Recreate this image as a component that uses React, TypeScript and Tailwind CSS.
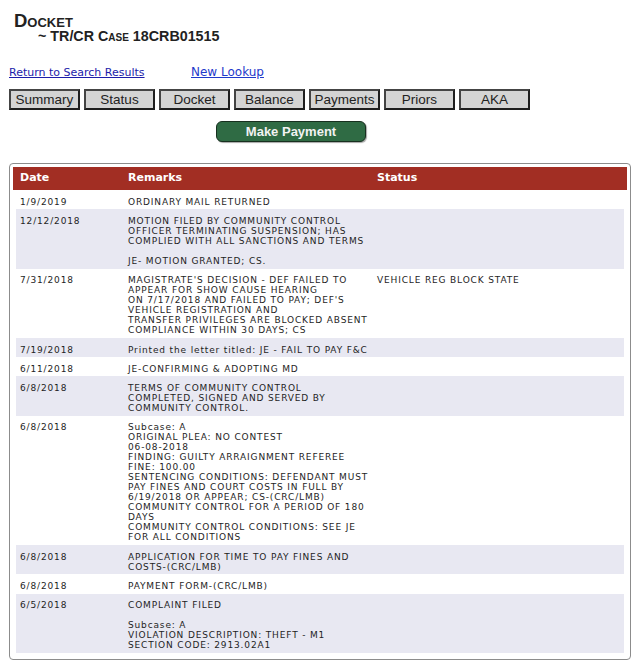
import { FC } from 'react';

interface DocketRow {
  date: string;
  remarks: string[];
  status?: string;
}

const tabs = ['Summary', 'Status', 'Docket', 'Balance', 'Payments', 'Priors', 'AKA'];

const rows: DocketRow[] = [
  { date: '1/9/2019', remarks: ['ORDINARY MAIL RETURNED'] },
  {
    date: '12/12/2018',
    remarks: [
      'MOTION FILED BY COMMUNITY CONTROL',
      'OFFICER TERMINATING SUSPENSION; HAS',
      'COMPLIED WITH ALL SANCTIONS AND TERMS',
      '',
      'JE- MOTION GRANTED; CS.',
    ],
  },
  {
    date: '7/31/2018',
    remarks: [
      "MAGISTRATE'S DECISION - DEF FAILED TO",
      'APPEAR FOR SHOW CAUSE HEARING',
      "ON 7/17/2018 AND FAILED TO PAY; DEF'S",
      'VEHICLE REGISTRATION AND',
      'TRANSFER PRIVILEGES ARE BLOCKED ABSENT',
      'COMPLIANCE WITHIN 30 DAYS; CS',
    ],
    status: 'VEHICLE REG BLOCK STATE',
  },
  { date: '7/19/2018', remarks: ['Printed the letter titled: JE - FAIL TO PAY F&C'] },
  { date: '6/11/2018', remarks: ['JE-CONFIRMING & ADOPTING MD'] },
  {
    date: '6/8/2018',
    remarks: ['TERMS OF COMMUNITY CONTROL', 'COMPLETED, SIGNED AND SERVED BY', 'COMMUNITY CONTROL.'],
  },
  {
    date: '6/8/2018',
    remarks: [
      'Subcase: A',
      'ORIGINAL PLEA: NO CONTEST',
      '06-08-2018',
      'FINDING: GUILTY ARRAIGNMENT REFEREE',
      'FINE: 100.00',
      'SENTENCING CONDITIONS: DEFENDANT MUST',
      'PAY FINES AND COURT COSTS IN FULL BY',
      '6/19/2018 OR APPEAR; CS-(CRC/LMB)',
      'COMMUNITY CONTROL FOR A PERIOD OF 180',
      'DAYS',
      'COMMUNITY CONTROL CONDITIONS: SEE JE',
      'FOR ALL CONDITIONS',
    ],
  },
  {
    date: '6/8/2018',
    remarks: ['APPLICATION FOR TIME TO PAY FINES AND', 'COSTS-(CRC/LMB)'],
  },
  { date: '6/8/2018', remarks: ['PAYMENT FORM-(CRC/LMB)'] },
  {
    date: '6/5/2018',
    remarks: [
      'COMPLAINT FILED',
      '',
      'Subcase: A',
      'VIOLATION DESCRIPTION: THEFT - M1',
      'SECTION CODE: 2913.02A1',
    ],
  },
];

const App: FC = () => {
  return (
    <div className="w-[642px] min-h-[672px] bg-white text-[#222] font-['Liberation_Sans',Arial,sans-serif]">
      {/* title */}
      <div className="pl-[14px] pt-[12px]">
        <div className="text-[18.5px] leading-[17px] font-bold [font-variant:small-caps]">Docket</div>
        <div className="pl-[24px] text-[14.3px] leading-[14px] font-bold [font-variant:small-caps]">
          ~ TR/CR Case 18CRB01515
        </div>
      </div>

      {/* links */}
      <div className="flex items-end pl-[9px] pt-[22px] font-['DejaVu_Sans',Verdana,sans-serif]">
        <a href="#" className="text-[11px] leading-[14px] text-[#1c1caa] underline w-[182px]">
          Return to Search Results
        </a>
        <a href="#" className="text-[12px] leading-[15px] text-[#1f3acb] underline">
          New Lookup
        </a>
      </div>

      {/* tabs */}
      <div className="flex gap-[4px] pl-[9px] pt-[9px]">
        {tabs.map((t) => (
          <button
            key={t}
            className="w-[71px] h-[21px] bg-[#d4d4d4] border-2 border-t-[#444] border-l-[#444] border-r-[#1e1e1e] border-b-[#1e1e1e] text-[13.5px] leading-[15px] text-[#222]"
          >
            {t}
          </button>
        ))}
      </div>

      {/* make payment */}
      <div className="pl-[216px] pt-[9px]">
        <button className="w-[150px] h-[21px] rounded-[6px] bg-[#2f6b44] border border-[#17301f] shadow-[1px_1px_1px_rgba(0,0,0,0.35)] text-[13px] leading-[15px] font-bold text-[#f2f2f2]">
          Make Payment
        </button>
      </div>

      {/* docket table */}
      <div className="ml-[9px] w-[622px] mt-[20px] border border-[#8c8c8c] rounded-[4px] p-[3px] pb-[6px] font-['DejaVu_Sans',Verdana,sans-serif]">
        <div className="grid grid-cols-[108px_249px_1fr] h-[23px] items-center bg-[#a22e23] text-white text-[11px] font-bold px-[3px]">
          <div className="pl-[4px]">Date</div>
          <div className="pl-[4px]">Remarks</div>
          <div className="pl-[4px]">Status</div>
        </div>
        <div className="px-[3px]">
          {rows.map((r, i) => (
            <div
              key={i}
              className={`grid grid-cols-[108px_249px_1fr] pt-[6.7px] pb-[2.6px] text-[9px] tracking-[0.85px] leading-[10px] text-[#1e1e1e] ${
                i % 2 === 1 ? 'bg-[#e8e8f2]' : 'bg-white'
              }`}
            >
              <div className="pl-[4px]">{r.date}</div>
              <div className="pl-[4px]">
                {r.remarks.map((l, j) => (
                  <div key={j} className="whitespace-nowrap h-[10px]">
                    {l}
                  </div>
                ))}
              </div>
              <div className="pl-[4px] whitespace-nowrap">{r.status}</div>
            </div>
          ))}
        </div>
      </div>
    </div>
  );
};

export default App;
